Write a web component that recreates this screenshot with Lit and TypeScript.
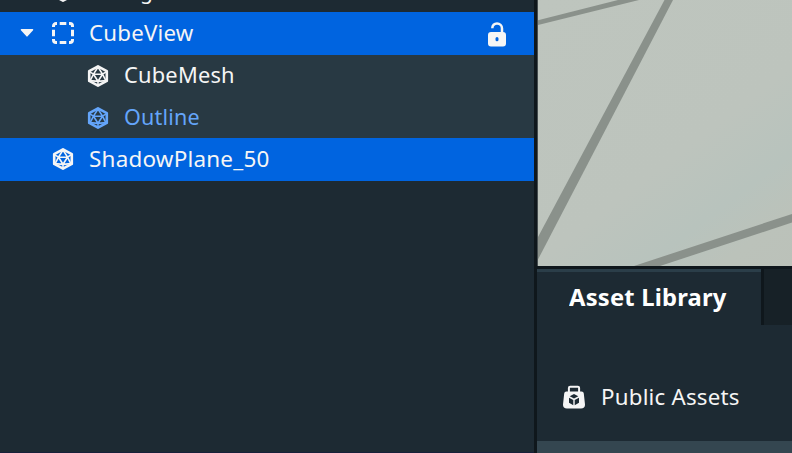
import { LitElement, html, css } from "lit";
import { customElement } from "lit/decorators.js";

const mesh = html`<svg class="icon" width="22" height="22" viewBox="0 0 22 22" fill="none" stroke="currentColor" stroke-linejoin="round">
  <path d="M11 1.300 19.800 6.100v9.800L11 20.700 2.200 15.900V6.100Z" stroke-width="2.600"/>
  <path d="M11 2 6.500 9.200h9L11 2ZM6.500 9.200 11 16.200l4.500-7M2.800 6.800l3.700 2.400M19.200 6.800l-3.700 2.400M6.500 9.200 3.200 15.600l7.800.8 7.800-.8-3.300-6.400M11 16v4" stroke-width="1.600"/>
</svg>`;

const group = html`<svg class="icon" width="22" height="22" viewBox="0 0 22 22" fill="none" stroke="currentColor" stroke-width="3">
  <path d="M1.500 5V4a2.500 2.500 0 0 1 2.500-2.500H5M17 1.500h1A2.500 2.500 0 0 1 20.500 4v1M20.500 17v1a2.500 2.500 0 0 1-2.500 2.500h-1M5 20.500H4A2.500 2.500 0 0 1 1.500 18v-1M7.700 1.500h6.600M7.700 20.500h6.600M1.500 7.700v6.600M20.500 7.700v6.600"/>
</svg>`;

const lock = html`<svg width="18" height="25" viewBox="0 0 18 25">
  <path d="M4.300 6.200C4.300 3.200 6.300 1.500 9 1.500s5 2 5 5V11" fill="none" stroke="currentColor" stroke-width="2.500"/>
  <path fill="currentColor" fill-rule="evenodd" d="M3 10h12a3 3 0 0 1 3 3v8.500a3 3 0 0 1-3 3H3a3 3 0 0 1-3-3V13a3 3 0 0 1 3-3Zm6 5a1.500 1.500 0 0 0-1.500 1.500v1.300a1.500 1.500 0 0 0 3 0v-1.300A1.500 1.500 0 0 0 9 15Z"/>
</svg>`;

const bag = html`<svg width="24" height="24" viewBox="0 0 24 24">
  <path d="M6.900 7V3a1.300 1.300 0 0 1 1.300-1.300h7.600A1.300 1.300 0 0 1 17.100 3v4" fill="none" stroke="currentColor" stroke-width="2"/>
  <path d="M4.400 6.500h15.200a2.200 2.200 0 0 1 2.200 2l1.200 11c.2 2.800-1.500 4-4 4H5c-2.500 0-4.200-1.200-4-4l1.200-11a2.200 2.200 0 0 1 2.200-2Z" fill="currentColor"/>
  <path d="m12 9 4.300 2.200-4.300 2.300-4.300-2.300ZM7 12.800l4.300 2.300v5.100L7 17.800ZM17 12.800l-4.300 2.300v5.100l4.300-2.400Z" fill="#1d2a33"/>
</svg>`;

@customElement("app-root")
export class AppRoot extends LitElement {
  static styles = css`
    :host { display: block; }
    .app {
      display: grid; grid-template-columns: 534px 1fr; width: 792px; height: 453px;
      overflow: hidden; background: #1d2a33; color: #f5f5f5;
      font-family: "Noto Sans", sans-serif; font-size: 21px; letter-spacing: 0.2px;
    }
    svg { display: block; flex: none; }
    .tree { display: flex; flex-direction: column; height: 452px; overflow: hidden; border-bottom: 1px solid #17203a; }
    .row { display: flex; align-items: center; flex: none; height: 42px; box-sizing: border-box; padding-left: 20px; white-space: nowrap; }
    .previous { margin-top: -30px; }
    .selected { background: #0064e0; height: 42.500px; }
    .child { background: #283943; padding-left: 55px; height: 41.750px; }
    .arrow { width: 14px; flex: none; }
    .slot { width: 55px; flex: none; display: flex; justify-content: center; }
    .slot svg { margin-left: 3px; }
    .child .slot { padding-top: 1px; }
    .label { display: inline-block; line-height: 28px; transform-origin: left center; }
    .cube { transform: scaleX(1.06); }
    .meshname { transform: scaleX(1.04); }
    .linked { color: #64a5fa; }
    .outline { transform: scaleX(1.026); }
    .plane { transform: scaleX(1.069); }
    .cut { margin-left: 51px; }
    .lock { margin-left: auto; padding-right: 28px; padding-top: 3px; }
    .side { display: flex; flex-direction: column; border-left: 3px solid #0f171c; min-width: 0; }
    .view { height: 266px; flex: none; background: #bdc4bd; overflow: hidden; border-left: 1px solid #454d4f; }
    .tabs { display: flex; flex: none; height: 56px; border-top: 3px solid #0f171c; }
    .tab {
      width: 224px; box-sizing: border-box; border-top: 3px solid #2b3e49; padding: 0 0 4px 32px;
      display: flex; align-items: center; font-size: 23px; font-weight: 700; color: #fff; white-space: nowrap;
    }
    .title { display: inline-block; transform: scaleX(1.033); transform-origin: left center; }
    .rest { flex: 1; border-left: 3px solid #0f171c; background: #172127; }
    .asset { display: flex; align-items: center; height: 116px; box-sizing: border-box; padding: 28px 0 0 25px; gap: 15px; white-space: nowrap; }
    .public { transform: scaleX(1.062); }
    .foot { flex: 1; background: #344650; }
  `;

  render() {
    return html`<div class="app">
      <div class="tree">
        <div class="row previous"><span class="arrow"></span><span class="slot">${mesh}</span><span class="label cut">g</span></div>
        <div class="row selected">
          <svg class="arrow" width="14" height="8" viewBox="0 0 14 8"><path d="M1.500 0h11a.8.8 0 0 1 .6 1.200L7.600 7.300a.8.8 0 0 1-1.200 0L.9 1.200A.8.8 0 0 1 1.500 0Z" fill="currentColor"/></svg>
          <span class="slot">${group}</span><span class="label cube">CubeView</span><span class="lock">${lock}</span>
        </div>
        <div class="row child"><span class="arrow"></span><span class="slot">${mesh}</span><span class="label meshname">CubeMesh</span></div>
        <div class="row child linked"><span class="arrow"></span><span class="slot">${mesh}</span><span class="label outline">Outline</span></div>
        <div class="row selected"><span class="arrow"></span><span class="slot">${mesh}</span><span class="label plane">ShadowPlane_50</span></div>
      </div>
      <div class="side">
        <div class="view">
          <svg width="254" height="266" viewBox="0 0 254 266">
            <defs><linearGradient id="g" gradientUnits="userSpaceOnUse" x1="0" y1="0" x2="230" y2="300"><stop offset="0" stop-color="#bec5be"/><stop offset=".55" stop-color="#bdc4bd"/><stop offset=".73" stop-color="#b8c3bd"/><stop offset=".85" stop-color="#bbc2ba"/><stop offset="1" stop-color="#bbc1b9"/></linearGradient></defs>
            <rect width="254" height="266" fill="url(#g)"/>
            <g fill="#8a918b"><path d="M0 20.300 80 0H101L0 25Z"/><path d="M126.500 0h8.500L0 259.500V237Z"/><path d="M96 266 254 214v8.500L122 266Z"/></g>
          </svg>
        </div>
        <div class="tabs"><div class="tab"><span class="title">Asset Library</span></div><div class="rest"></div></div>
        <div class="asset">${bag}<span class="label public">Public Assets</span></div>
        <div class="foot"></div>
      </div>
    </div>`;
  }
}
